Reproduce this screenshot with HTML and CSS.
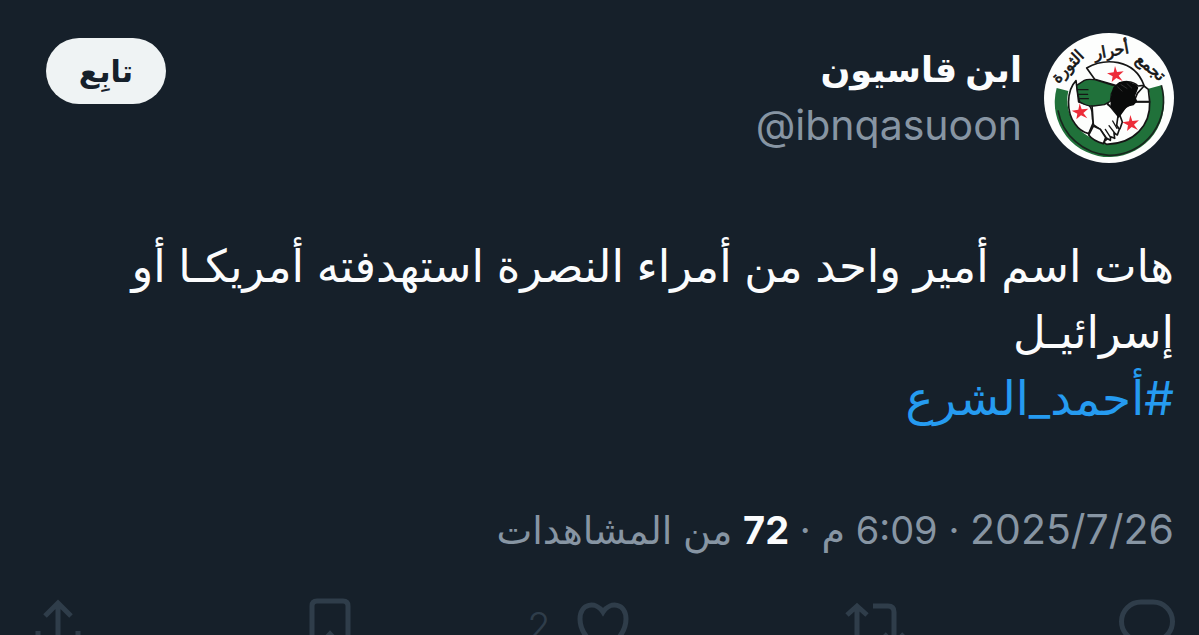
FILE: index.html
```html
<!DOCTYPE html>
<html lang="ar" dir="rtl">
<head>
<meta charset="utf-8">
<meta name="viewport" content="width=device-width, initial-scale=1">
<title>ابن قاسيون</title>
<link rel="stylesheet" href="styles.css">
</head>
<body>
<article class="post">
  <header class="header">
    <svg class="avatar" viewBox="30 23 390 390" aria-hidden="true">
      <circle cx="225" cy="218" r="195" fill="#fdfefd"/>
      <path d="M68 188A164 164 0 1 0 382 180L343 190A124 124 0 1 1 103 197Z" fill="#20713a"/>
      <path d="M72 255A164 164 0 0 0 225 390A164 164 0 0 0 382 180" fill="none" stroke="#18251d" stroke-width="5"/>
      <g fill="#fdfefd" stroke="#151515" stroke-width="5" stroke-linejoin="round" stroke-linecap="round">
        <path d="M158 128C210 98 300 98 330 180L312 182C296 165 265 165 247 181L182 162Z"/>
        <path d="M126 166C97 196 96 262 124 297C134 312 152 322 164 325L178 292C170 270 182 255 164 239L134 230Z"/>
        <path d="M347 230C350 300 300 355 218 357L208 350L258 310L265 290L254 260L302 229Z"/>
        <path d="M174 240L220 233L252 272L248 300L256 312L250 329L240 323L242 339L230 334L229 345L217 338L200 314L178 298Z"/>
        <path d="M178 302L164 329C174 342 190 350 208 355L215 337L199 312Z"/>
        <path d="M330 182L343 192L347 229L300 229L310 204Z"/>
      </g>
      <path d="M128 180L151 165Q160 160 182 163L244 182L232 205L229 228L211 238L178 242Q155 242 137 229L134 216L131 202Z" fill="#20713a" stroke="#151515" stroke-width="4" stroke-linejoin="round"/>
      <path d="M132 193H162M134 207H161M137 220H163M220 237Q238 248 247 263M249 309L236 287M242 323L225 301M230 337L214 312" fill="none" stroke="#151515" stroke-width="4" stroke-linecap="round"/>
      <path d="M237 187L256 170L281 168L307 178L313 187L303 213L310 228L299 240L279 244L254 279L247 266L229 242L231 213Z" fill="#090a0a"/>
      <path d="M260 177L280 190M278 174L294 189M250 184L265 198" stroke="#454545" stroke-width="2"/>
      <g fill="#ed2c38">
        <path id="star" d="M243 122L249 140L269 138L254 151L266 167L247 158L233 170L236 153L219 144L239 141Z"/>
        <use href="#star" x="-106" y="112"/>
        <use href="#star" x="46" y="147"/>
      </g>
      <g class="seal" text-anchor="middle">
        <text transform="translate(340 138) rotate(40)">تجمع</text>
        <text transform="translate(235 92) rotate(-10)">أحرار</text>
        <text transform="translate(112 135) rotate(-45)">الثورة</text>
      </g>
    </svg>
    <div class="identity">
      <h1 class="name">ابن قاسيون</h1>
      <a class="handle" href="#profile" dir="ltr">@ibnqasuoon</a>
    </div>
    <button class="follow" type="button">تابِع</button>
  </header>

  <p class="body">هات اسم أمير واحد من أمراء النصرة استهدفته أمريكـا أو إسرائيـل<br><a class="tag" href="#tag">#أحمد_الشرع</a></p>

  <p class="meta"><bdi class="date" dir="ltr">2025/7/26</bdi> · <bdi dir="ltr">6:09</bdi> م · <strong>72</strong> من المشاهدات</p>

  <footer class="actions">
    <button class="action" type="button" aria-label="رد">
      <svg viewBox="0 0 60 60"><path d="M24 4H36A19 19 0 0 1 36 43L24 55V43A19 19 0 0 1 24 4Z"/></svg>
    </button>
    <button class="action" type="button" aria-label="إعادة نشر">
      <svg viewBox="0 0 60 60"><path d="M2 17L12 8L22 17M12 9V44Q12 50 18 50H25M28 8H43Q49 8 49 14V48M39 36L49 46L59 36"/></svg>
    </button>
    <button class="action" type="button" aria-label="إعجاب">
      <svg viewBox="0 0 60 60"><path d="M30 14C23 3 7 5 7 21C7 36 19 46 30 53C41 46 53 36 53 21C53 5 37 3 30 14Z"/></svg>
      <span class="count">2</span>
    </button>
    <button class="action" type="button" aria-label="حفظ">
      <svg viewBox="0 0 60 60"><path d="M12 55V8Q12 3 17 3H43Q48 3 48 8V55L30 36Z"/></svg>
    </button>
    <button class="action" type="button" aria-label="مشاركة">
      <svg viewBox="0 0 60 60"><path d="M17 18L30 5L43 18M30 6V42M10 33V50Q10 54 14 54H46Q50 54 50 50V33"/></svg>
    </button>
  </footer>
</article>
</body>
</html>
```
FILE: styles.css
```css
* { box-sizing: border-box; }

body {
  margin: 0;
  background: #16202a;
  color: #fbfcfd;
  font-family: Inter, "DejaVu Sans", sans-serif;
}

.post {
  height: 100vh;
  overflow: hidden;
  padding: 33px 25px 0;
}

.header {
  display: flex;
  align-items: flex-start;
  gap: 22px;
}

.avatar {
  width: 130px;
  height: 130px;
  flex: none;
}

.seal {
  fill: #151515;
  stroke: #151515;
  stroke-width: 2px;
  font: 48px "DejaVu Sans", sans-serif;
}

.identity {
  display: flex;
  flex-direction: column;
  align-items: flex-start;
  flex: 1;
  padding-top: 8px;
}

.name {
  margin: 0;
  font-size: 35px;
  line-height: 56px;
  font-weight: 700;
}

.handle {
  color: #8795a3;
  font-size: 41px;
  line-height: 56px;
  text-decoration: none;
}

.follow {
  margin-top: 5px;
  margin-inline-end: 21px;
  width: 120px;
  height: 66px;
  border: 0;
  border-radius: 33px;
  background: #eff3f4;
  color: #16202a;
  font: bold 30px "DejaVu Sans", sans-serif;
}

.body {
  margin: 70px 0 0;
  font-size: 45px;
  line-height: 66px;
}

.tag {
  color: #259bf0;
  font-size: 47px;
  text-decoration: none;
}

.meta {
  margin: 67px 0 0;
  color: #8795a3;
  font-size: 38px;
  line-height: 60px;
}

.date { font-size: 41px; }

.meta strong { color: #fbfcfd; }

.actions {
  display: flex;
  justify-content: space-between;
  margin: 38px -3px 0 3px;
}

.action {
  display: flex;
  gap: 22px;
  width: 60px;
  padding: 0;
  border: 0;
  background: none;
  color: #2f3d4a;
  font: 300 38px Inter, sans-serif;
}

.action svg {
  width: 60px;
  height: 60px;
  flex: none;
  fill: none;
  stroke: currentColor;
  stroke-width: 5;
}

.count { line-height: 56px; }
```
